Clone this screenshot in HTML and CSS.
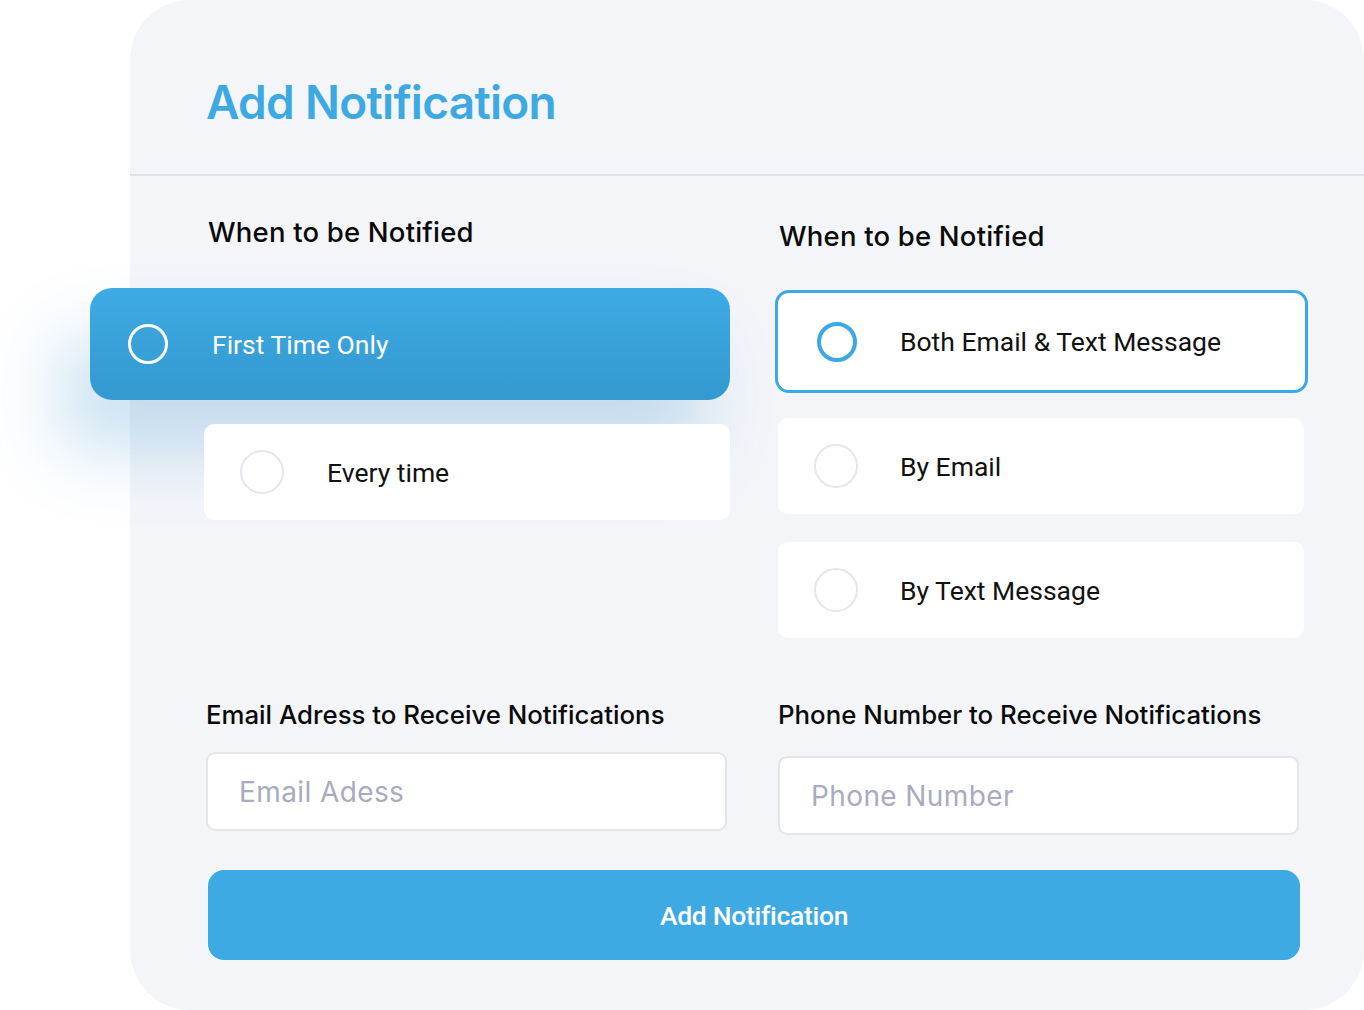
FILE: index.html
```html
<!DOCTYPE html>
<html lang="en">
<head>
<meta charset="utf-8">
<title>Add Notification</title>
<link rel="stylesheet" href="styles.css">
</head>
<body>
<div class="card">
  <header class="card-header">
    <h1 class="title">Add Notification</h1>
  </header>
  <section class="card-body">
    <div class="options-grid">
      <div class="col col-left">
        <h2 class="heading">When to be Notified</h2>
        <div class="option option-active">
          <span class="radio radio-white"></span>
          <span class="option-label">First Time Only</span>
        </div>
        <div class="option option-plain option-every">
          <span class="radio radio-empty"></span>
          <span class="option-label">Every time</span>
        </div>
      </div>
      <div class="col col-right">
        <h2 class="heading heading-right">When to be Notified</h2>
        <div class="option option-outlined">
          <span class="radio radio-blue"></span>
          <span class="option-label">Both Email &amp; Text Message</span>
        </div>
        <div class="option option-plain option-r">
          <span class="radio radio-empty"></span>
          <span class="option-label">By Email</span>
        </div>
        <div class="option option-plain option-r option-last">
          <span class="radio radio-empty"></span>
          <span class="option-label">By Text Message</span>
        </div>
      </div>
    </div>
    <div class="inputs-grid">
      <div class="field field-left">
        <label class="field-label">Email Adress to Receive Notifications</label>
        <div class="input"><span class="placeholder">Email Adess</span></div>
      </div>
      <div class="field field-right">
        <label class="field-label">Phone Number to Receive Notifications</label>
        <div class="input"><span class="placeholder">Phone Number</span></div>
      </div>
    </div>
    <button class="submit">Add Notification</button>
  </section>
</div>
</body>
</html>
```
FILE: styles.css
```css
* { box-sizing: border-box; }
html, body { margin: 0; padding: 0; background: #ffffff; }
body {
  width: 1364px;
  height: 1010px;
  overflow: hidden;
  font-family: "Roboto", "Liberation Sans", sans-serif;
}
.card {
  margin-left: 130px;
  width: 1234px;
  height: 1010px;
  background: #f3f5f9;
  border-radius: 60px;
  display: flex;
  flex-direction: column;
}
.card-header {
  height: 176px;
  border-bottom: 2px solid #dde3e7;
  padding-left: 76px;
  display: flex;
  align-items: center;
}
.title {
  margin: 0;
  margin-top: 30px;
  font-family: "Inter", "Liberation Sans", sans-serif;
  font-weight: 600;
  font-size: 46px;
  letter-spacing: -0.7px;
  color: #3da9e2;
}
.card-body {
  padding-left: 78px;
  padding-top: 38px;
}
.options-grid {
  display: grid;
  grid-template-columns: 522px 530px;
  column-gap: 48px;
  align-items: start;
}
.col { display: flex; flex-direction: column; }
.heading {
  margin: 0;
  font-family: "Inter", "Lato", sans-serif;
  font-weight: 500;
  font-size: 27.5px;
  letter-spacing: 0.2px;
  line-height: 36px;
  color: #0a0a0a;
}
.heading-right { margin-top: 4px; margin-left: 1px; }
.option {
  display: flex;
  align-items: center;
  background: #ffffff;
}
.option-label {
  font-family: "Roboto", sans-serif;
  font-size: 26.5px;
  color: #111111;
  letter-spacing: 0;
}
.option-active {
  margin-top: 38px;
  margin-left: -118px;
  width: 640px;
  height: 112px;
  border-radius: 22px;
  background: linear-gradient(180deg, #3eaae4 0%, #3399cf 100%);
  box-shadow: -30px 50px 70px rgba(70, 150, 210, 0.28);
  padding-left: 38px;
}
.option-active .option-label { color: #ffffff; margin-left: 44px; }
.option-every {
  margin-top: 24px;
  margin-left: -4px;
  width: 526px;
  height: 96px;
  border-radius: 10px;
  padding-left: 36px;
}
.option-every .option-label { margin-left: 43px; }
.option-outlined {
  margin-top: 36px;
  margin-left: -3px;
  width: 533px;
  height: 103px;
  border: 3px solid #3da9e2;
  border-radius: 14px;
  padding-left: 39px;
}
.option-outlined .option-label { margin-left: 43px; }
.option-r {
  margin-top: 25px;
  width: 526px;
  height: 96px;
  border-radius: 10px;
  padding-left: 36px;
}
.option-last { margin-top: 28px; }
.option-r .option-label { margin-left: 42px; }
.radio {
  flex: none;
  display: block;
  border-radius: 50%;
}
.radio-white {
  width: 40px; height: 40px;
  border: 3px solid #ffffff;
}
.radio-blue {
  width: 40px; height: 40px;
  border: 4px solid #3da9e2;
}
.radio-empty {
  width: 44px; height: 44px;
  border: 2px solid #e3e6ec;
}
.inputs-grid {
  margin-top: 59px;
  display: grid;
  grid-template-columns: 522px 521px;
  column-gap: 48px;
  align-items: start;
}
.field { display: flex; flex-direction: column; }
.field-left { margin-left: -2px; width: 521px; }
.field-label {
  font-family: "Inter", "Lato", sans-serif;
  font-weight: 500;
  font-size: 25.8px;
  line-height: 36px;
  letter-spacing: 0;
  color: #0a0a0a;
}
.input {
  background: #ffffff;
  border: 2px solid #e3e5ea;
  border-radius: 9px;
  height: 79px;
  margin-top: 19px;
  display: flex;
  align-items: center;
  padding-left: 31px;
}
.field-right .input { margin-top: 23px; }
.placeholder {
  font-family: "Inter", "Lato", sans-serif;
  font-size: 28px;
  color: #a9abbe;
  letter-spacing: 0.4px;
}
.submit {
  margin-top: 35px;
  width: 1092px;
  height: 90px;
  border: none;
  border-radius: 16px;
  background: #3daae3;
  color: #ffffff;
  font-family: "Roboto", sans-serif;
  font-weight: 500;
  font-size: 26.5px;
  letter-spacing: -0.3px;
  display: block;
  padding: 0;
}
```
